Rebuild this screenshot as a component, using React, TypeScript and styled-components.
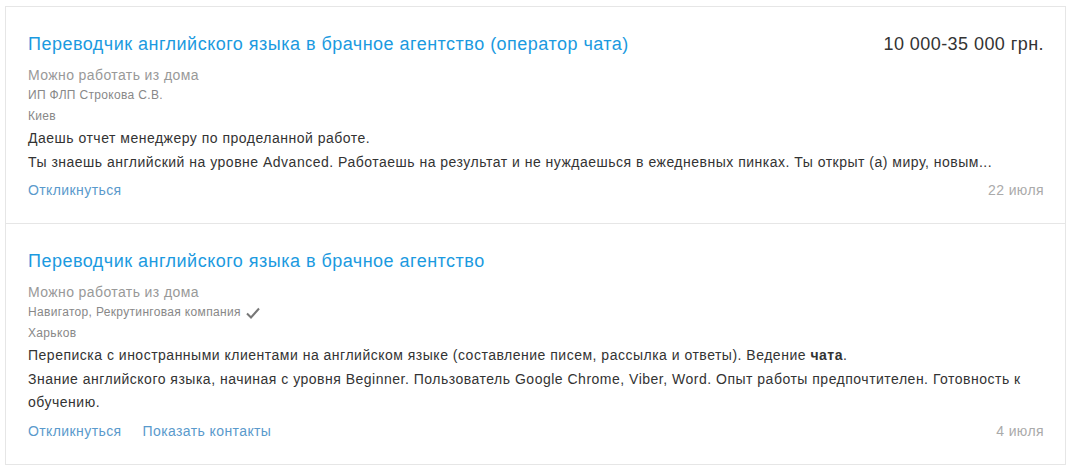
import React from "react";
import styled, { createGlobalStyle } from "styled-components";

const Global = createGlobalStyle`
  html, body { margin: 0; padding: 0; background: #fff; }
  body { font-family: "Liberation Sans", Arial, sans-serif; }
`;

const List = styled.div`
  margin: 6px 0 0 5px;
  width: 1059px;
  border: 1px solid #e6e6e6;
  background: #fff;
`;

const Card = styled.div`
  padding: 25px 21px 23px 22px;
  & + & { border-top: 1px solid #e6e6e6; }
`;

const Head = styled.div`
  display: flex;
  justify-content: space-between;
  align-items: center;
`;

const Title = styled.a`
  font-size: 18px;
  line-height: 24px;
  letter-spacing: 0.48px;
  color: #1b9ae0;
  text-decoration: none;
`;

const Price = styled.div`
  font-size: 18px;
  line-height: 24px;
  letter-spacing: 0.44px;
  color: #333;
`;

const Remote = styled.div`
  margin-top: 9px;
  font-size: 14px;
  line-height: 20px;
  letter-spacing: 0.4px;
  color: #999;
`;

const Meta = styled.div`
  font-size: 12px;
  line-height: 21px;
  letter-spacing: 0.33px;
  color: #888;
  display: flex;
  align-items: center;
  gap: 4px;
`;

const Desc = styled.div`
  font-size: 14px;
  line-height: 23.5px;
  letter-spacing: 0.5px;
  color: #333;
  b { font-weight: bold; }
`;

const Foot = styled.div<{ $gap: number }>`
  margin-top: ${(p) => p.$gap}px;
  display: flex;
  align-items: center;
  font-size: 14px;
  line-height: 20px;
  letter-spacing: 0.4px;
`;

const Action = styled.a`
  color: #5a9acc;
  text-decoration: none;
  margin-right: 21px;
`;

const DateText = styled.span`
  margin-left: auto;
  color: #aaa;
`;

const Check = () => (
  <svg width="16" height="14" viewBox="0 0 16 14">
    <path d="M2 7.5 L6 11.5 L14 2.5" fill="none" stroke="#777" strokeWidth="2" />
  </svg>
);

export default function App() {
  return (
    <>
      <Global />
      <List>
        <Card>
          <Head>
            <Title href="#">Переводчик английского языка в брачное агентство (оператор чата)</Title>
            <Price>10 000-35 000 грн.</Price>
          </Head>
          <Remote>Можно работать из дома</Remote>
          <Meta>ИП ФЛП Строкова С.В.</Meta>
          <Meta>Киев</Meta>
          <Desc>
            Даешь отчет менеджеру по проделанной работе.
            <br />
            Ты знаешь английский на уровне Advanced. Работаешь на результат и не нуждаешься в ежедневных пинках. Ты открыт (а) миру, новым...
          </Desc>
          <Foot $gap={6}>
            <Action href="#">Откликнуться</Action>
            <DateText>22 июля</DateText>
          </Foot>
        </Card>
        <Card>
          <Head>
            <Title href="#">Переводчик английского языка в брачное агентство</Title>
          </Head>
          <Remote>Можно работать из дома</Remote>
          <Meta>
            Навигатор, Рекрутинговая компания <Check />
          </Meta>
          <Meta>Харьков</Meta>
          <Desc>
            Переписка с иностранными клиентами на английском языке (составление писем, рассылка и ответы). Ведение <b>чата</b>.
            <br />
            Знание английского языка, начиная с уровня Beginner. Пользователь Google Chrome, Viber, Word. Опыт работы предпочтителен. Готовность к обучению.
          </Desc>
          <Foot $gap={6}>
            <Action href="#">Откликнуться</Action>
            <Action href="#">Показать контакты</Action>
            <DateText>4 июля</DateText>
          </Foot>
        </Card>
      </List>
    </>
  );
}
